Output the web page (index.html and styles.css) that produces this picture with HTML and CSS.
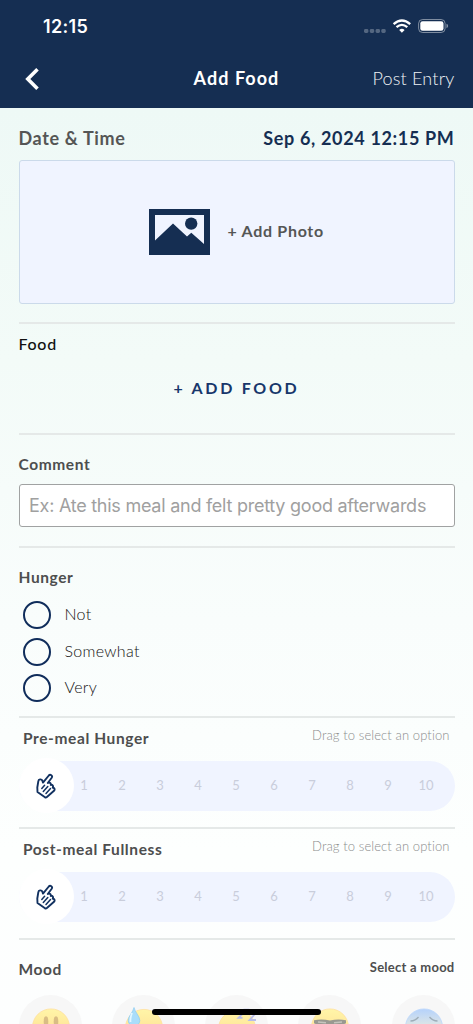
FILE: index.html
```html
<!DOCTYPE html>
<html lang="en">
<head>
<meta charset="utf-8">
<title>Add Food</title>
<link rel="stylesheet" href="styles.css">
</head>
<body>
<svg class="defs" width="0" height="0" aria-hidden="true">
  <defs>
    <linearGradient id="yellow" x1="0" y1="0" x2="0" y2="1"><stop offset="0" stop-color="#fff5a8"/><stop offset=".5" stop-color="#ffe69a"/><stop offset="1" stop-color="#ffd08a"/></linearGradient>
    <linearGradient id="blue" x1="0" y1="0" x2="0" y2="1"><stop offset="0" stop-color="#b5d2fb"/><stop offset=".4" stop-color="#d9e4e8"/><stop offset=".7" stop-color="#fff0b0"/></linearGradient>
    <symbol id="hand" viewBox="0 0 22 26">
      <g fill="none" stroke="#123160" stroke-width="1.9" stroke-linecap="round" stroke-linejoin="round">
        <path d="M8 9.600 13.800 2.500C15.300.8 18 2.800 16.700 4.800L12.800 10M8 9.600 7.300 7.500C6.500 5.800 3.500 6 3.300 8.300L2.300 14.500 2.500 19 10 24.300C10.800 24.700 11.500 24.300 12.200 23.700L19 17.800C20.400 16.200 19 14.500 17.700 14.700 18.800 12.800 17 11.200 15.800 12 16.300 10 14.200 9 12.800 10"/>
        <path stroke-width="1.500" d="m6.800 15.500 2.800-3.200M8.300 18.500l4.500-5M11 20.500l4.500-5"/>
      </g>
    </symbol>
  </defs>
</svg>
<header class="header">
  <div class="status">
    <span class="clock">12:15</span>
    <svg class="indicators" width="86" height="16" viewBox="0 0 86 16">
      <g fill="#fff" opacity=".27"><rect x="0" y="11" width="4.4" height="4" rx="1.4"/><rect x="5.8" y="11" width="4.4" height="4" rx="1.4"/><rect x="11.6" y="11" width="4.4" height="4" rx="1.4"/><rect x="17.3" y="11" width="4.4" height="4" rx="1.4"/></g>
      <g fill="none" stroke="#fff" stroke-width="2.3"><path d="M29.600 6.1Q37.900-1.2 46.200 6.1"/><path d="M32.500 9.2q5.4-4.7 10.8 0"/></g>
      <path d="M35.200 11.9q2.7-2.2 5.4 0L37.900 14.8z" fill="#fff"/>
      <rect x="54.600" y="1.5" width="26.5" height="13" rx="4" fill="none" stroke="#fff" opacity=".45"/>
      <rect x="56.300" y="3.2" width="23.2" height="9.6" rx="2.3" fill="#fff"/>
      <path d="M82.500 5.8q1.6.6 1.6 2.2t-1.6 2.2z" fill="#fff" opacity=".5"/>
    </svg>
  </div>
  <nav class="nav">
    <svg class="back" width="16" height="24" viewBox="0 0 16 24"><path d="M13.5 2.3 3.8 12l9.7 9.7" fill="none" stroke="#fff" stroke-width="3.6"/></svg>
    <h1 class="title">Add Food</h1>
    <span class="post">Post Entry</span>
  </nav>
</header>
<main class="content">
  <div class="date-row"><span class="date-label">Date &amp; Time</span><span class="date-value">Sep 6, 2024 12:15 PM</span></div>
  <div class="photo">
    <svg width="61" height="46" viewBox="0 0 61 46"><path fill="#152e52" d="M0 0h61v46H0z"/><path fill="#f0f4ff" d="M6 6h49v29L42.3 23.8 38 27.5 24 14.5 6 31.5z"/><circle cx="42.2" cy="14.6" r="6.2" fill="#152e52"/></svg>
    <span class="photo-label">+ Add Photo</span>
  </div>
  <section class="food"><h2 class="food-title">Food</h2><span class="add-food">+ ADD FOOD</span></section>
  <section class="comment"><h2 class="heading comment-title">Comment</h2><div class="input"><span class="placeholder">Ex: Ate this meal and felt pretty good afterwards</span></div></section>
  <section class="hunger">
    <h2 class="heading hunger-title">Hunger</h2>
    <div class="option"><i class="radio"></i><span class="choice">Not</span></div>
    <div class="option"><i class="radio"></i><span class="choice">Somewhat</span></div>
    <div class="option"><i class="radio"></i><span class="choice">Very</span></div>
  </section>
  <section class="scale">
    <div class="scale-head"><h2 class="heading">Pre-meal Hunger</h2><span class="hint">Drag to select an option</span></div>
    <div class="slider"><div class="thumb"><svg width="22" height="26"><use href="#hand"/></svg></div><div class="numbers"><span>1</span><span>2</span><span>3</span><span>4</span><span>5</span><span>6</span><span>7</span><span>8</span><span>9</span><span>10</span></div></div>
  </section>
  <section class="scale">
    <div class="scale-head"><h2 class="heading">Post-meal Fullness</h2><span class="hint">Drag to select an option</span></div>
    <div class="slider"><div class="thumb"><svg width="22" height="26"><use href="#hand"/></svg></div><div class="numbers"><span>1</span><span>2</span><span>3</span><span>4</span><span>5</span><span>6</span><span>7</span><span>8</span><span>9</span><span>10</span></div></div>
  </section>
  <section class="mood">
    <div class="mood-head"><h2 class="heading">Mood</h2><span class="select-mood">Select a mood</span></div>
    <div class="faces">
      <div class="face"><svg width="63" height="63" viewBox="0 0 63 63"><circle cx="32" cy="32.5" r="18.6" fill="url(#yellow)" stroke="#ffdfa0" stroke-width=".8"/><ellipse cx="27" cy="26.5" rx="2.3" ry="5.3" fill="#d9bd85"/><ellipse cx="37" cy="26.5" rx="2.3" ry="5.3" fill="#d9bd85"/><path d="M21 35q11 5 22 0-2 11-11 11t-11-11" fill="#b99675"/></svg></div>
      <div class="face"><svg width="63" height="63" viewBox="0 0 63 63"><circle cx="32" cy="33" r="18.6" fill="url(#yellow)" stroke="#ffdfa0" stroke-width=".8"/><path d="M22 12.5c1 5 5.8 8.500 5.800 13 0 7-11.600 7-11.600 0 0-4.500 4.800-8 5.800-13z" fill="#a9ddfa" stroke="#8ccbf0" stroke-width=".7"/><path d="M20 18q-2 5-1.500 9" fill="none" stroke="#e4f7ff" stroke-width="1.800"/></svg></div>
      <div class="face"><svg width="63" height="63" viewBox="0 0 63 63"><circle cx="32" cy="34" r="18.600" fill="url(#yellow)" stroke="#ffdfa0" stroke-width=".8"/><path d="M33.500 19h4l-4 3.800h4M45 18.500h5.500L44.500 25h6.500" fill="none" stroke="#b8bdea" stroke-width="1.800"/><path d="M38.500 14.500h4l-4 3.500h4" fill="none" stroke="#b8bdea" stroke-width="1.500"/></svg></div>
      <div class="face"><svg width="63" height="63" viewBox="0 0 63 63"><circle cx="32" cy="32.500" r="18.600" fill="url(#yellow)" stroke="#ffdfa0" stroke-width=".8"/><path d="M16 25.300q8-1.500 16 .3 8-1.800 16-.3v3l-2 .8q-1 6-7 6-5.500 0-6-6h-2q-.5 6-6 6-6 0-7-6l-2-.8z" fill="#999991"/><path d="m20 27 8 .7M36 27.700l8-.7" stroke="#c5c5bd" stroke-width="1.500"/></svg></div>
      <div class="face"><svg width="63" height="63" viewBox="0 0 63 63"><circle cx="32" cy="32.500" r="18.600" fill="url(#blue)" stroke="#bdd7fb" stroke-width=".8"/><path d="M18.500 26q5-.2 8-4M45.500 26q-5-.2-8-4" fill="none" stroke="#9eadb8" stroke-width="1.300"/><circle cx="25" cy="31" r="2" fill="#a89d80"/><circle cx="39" cy="31" r="2" fill="#a89d80"/></svg></div>
    </div>
  </section>
</main>
<div class="home-bar"></div>
</body>
</html>
```

FILE: styles.css
```css
* { box-sizing: border-box; }
body { margin: 0; width: 473px; height: 1024px; overflow: hidden; position: relative; display: flex; flex-direction: column; font-family: Lato, "Noto Sans", sans-serif; font-variant-ligatures: none; color: #4d4e4e; background: linear-gradient(#eef9f6 107px, #f3fbf8 360px, #f9fdfc 620px, #fdfffe 850px, #fdfefe); }
h1, h2 { margin: 0; }
span, h1, h2 { white-space: nowrap; }
svg { display: block; flex: none; }
.defs { position: absolute; }
.header { height: 107.5px; flex: none; background: #152e52; color: #fff; }
.status { height: 52px; padding: 2px 26px 0 43px; display: flex; align-items: center; justify-content: space-between; }
.clock { font: 600 18px/22px Inter, sans-serif; letter-spacing: .3px; }
.indicators { margin-right: -3px; margin-top: -2px; }
.nav { height: 52px; padding: 0 18.5px; display: grid; grid-template-columns: 1fr auto 1fr; align-items: center; }
.back { margin: 2px 0 0 5px; }
.title { font-size: 18px; line-height: 24px; font-weight: 700; letter-spacing: 1.050px; }
.post { justify-self: end; font-size: 18px; line-height: 24px; font-weight: 300; letter-spacing: .2px; color: #eef1f5; }
.content { padding: 0 18.5px 0 18.500px; }
.date-row { height: 52.500px; padding-top: 9px; display: flex; align-items: center; justify-content: space-between; font-size: 18px; font-weight: 700; letter-spacing: .650px; }
.date-label { color: #555655; }
.date-value { color: #152e52; }
.photo { height: 144px; border: 1px solid #cbdaea; border-radius: 3px; background: #f0f4ff; display: flex; align-items: center; padding-left: 129px; gap: 18px; }
.photo-label { margin-bottom: 3px; font-size: 16px; font-weight: 700; letter-spacing: .7px; color: #555655; }
.food { margin-top: 18px; height: 110.500px; border-top: 2px solid #e5e9e8; padding-top: 8px; display: flex; flex-direction: column; }
.food-title { font-size: 16px; line-height: 24px; font-weight: 500; color: #111; letter-spacing: .7px; }
.add-food { margin-top: 20px; align-self: center; font-size: 16px; line-height: 24px; font-weight: 700; color: #18376b; letter-spacing: 2.700px; }
.heading { font-size: 15.500px; line-height: 22px; font-weight: 700; letter-spacing: .6px; }
.comment { height: 113px; border-top: 2px solid #e5e9e8; padding-top: 18px; }
.input { margin-top: 9.500px; height: 43px; border: 1px solid #a0a2a2; border-radius: 3px; background: #fff; padding-left: 9.500px; display: flex; align-items: center; }
.placeholder { font: 18px/24px Inter, sans-serif; letter-spacing: -.250px; color: #a0a0a0; }
.hunger { height: 170px; border-top: 2px solid #e5e9e8; padding-top: 18px; }
.hunger-title { margin-bottom: 9.500px; }
.option { height: 36.600px; display: flex; align-items: center; padding-left: 4px; gap: 14px; font-size: 16px; font-weight: 300; letter-spacing: .3px; color: #111; }
.choice { margin-bottom: 3px; }
.radio { width: 28px; height: 28px; border: 2px solid #102d5b; border-radius: 50%; }
.scale { height: 111px; border-top: 2px solid #e5e9e8; padding-top: 7px; }
.scale-head { padding: 0 5px 0 4.500px; height: 36px; display: flex; justify-content: space-between; line-height: 26px; }
.scale-head .heading { line-height: 26px; }
.hint { font-size: 13px; line-height: 21px; font-weight: 300; letter-spacing: .1px; color: #8b8d8d; }
.slider { height: 50px; border-radius: 25px; background: #f0f4ff; display: flex; align-items: center; }
.thumb { width: 55px; height: 55px; border-radius: 50%; background: #fff; flex: none; display: grid; place-items: center; }
.numbers { display: grid; grid-template-columns: repeat(10, 38px); margin: 0 0 2px -8.500px; text-align: center; font-size: 13px; line-height: 20px; color: #c9cddb; }
.mood { border-top: 2px solid #e5e9e8; }
.mood-head { height: 55px; padding-top: 16px; display: flex; justify-content: space-between; }
.mood-head .heading { line-height: 26px; }
.select-mood { font-size: 13px; line-height: 22px; font-weight: 700; letter-spacing: .250px; }
.faces { display: flex; justify-content: space-between; }
.face { width: 63px; height: 63px; border-radius: 50%; background: #f7f7f7; }
.home-bar { position: absolute; left: 152px; top: 1008.500px; width: 169px; height: 6px; border-radius: 3px; background: #000; }
```
